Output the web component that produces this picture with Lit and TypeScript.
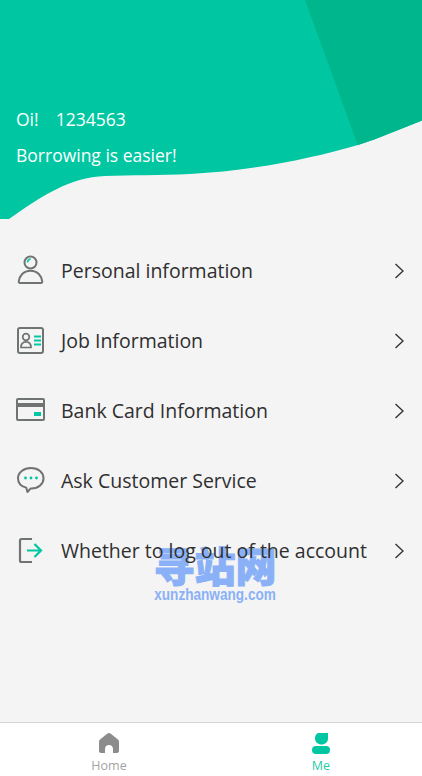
import { LitElement, html, css, svg } from 'lit';
import { customElement } from 'lit/decorators.js';

const GREY = '#6f7372';
const GREEN = '#00c7a2';

const menu = [
  {
    label: 'Personal information',
    icon: svg`
      <circle cx="14.500" cy="7.500" r="6" fill="none" stroke="${GREY}" stroke-width="2"/>
      <path d="M11.500 7.500a3.400 3.400 0 0 1 3.200-3.400" fill="none" stroke="${GREEN}" stroke-width="1.500"/>
      <path d="M4 28c-.9 0-1.400-.5-1.300-1.300.6-6 4.800-11 11.800-11s11.200 5 11.800 11c.1.800-.4 1.300-1.300 1.300z" fill="none" stroke="${GREY}" stroke-width="2"/>`,
  },
  {
    label: 'Job Information',
    icon: svg`
      <rect x="2" y="3" width="25" height="25" rx="2" fill="none" stroke="${GREY}" stroke-width="2"/>
      <circle cx="10" cy="12" r="3.300" fill="none" stroke="${GREY}" stroke-width="1.700"/>
      <path d="M5 22.500c0-3.700 2-5.700 5-5.700s5 2 5 5.700z" fill="none" stroke="${GREY}" stroke-width="1.700"/>
      <path d="M18 11.500h7M18 15.500h7M18 19.500h7" stroke="${GREEN}" stroke-width="1.800"/>`,
  },
  {
    label: 'Bank Card Information',
    icon: svg`
      <rect x="1" y="4" width="27" height="21" rx="1" fill="none" stroke="${GREY}" stroke-width="2"/>
      <rect x="1" y="8" width="27" height="4" fill="${GREY}"/>
      <rect x="18" y="17" width="7" height="4" fill="${GREEN}"/>`,
  },
  {
    label: 'Ask Customer Service',
    icon: svg`
      <path d="M15 3c7.500 0 12.500 4.500 12.500 10.200s-5 10.200-12 10.200h-.8L11.500 27l-1.300-4.400C5 21.300 2 17.700 2 13.200 2 7.500 7.500 3 15 3z" fill="none" stroke="${GREY}" stroke-width="2" stroke-linejoin="round"/>
      <circle cx="9.500" cy="13" r="1.400" fill="${GREEN}"/>
      <circle cx="15" cy="13" r="1.400" fill="${GREEN}"/>
      <circle cx="20.500" cy="13" r="1.400" fill="${GREEN}"/>`,
  },
  {
    label: 'Whether to log out of the account',
    icon: svg`
      <path d="M16 4H5.500C4.500 4 4 4.500 4 5.500v20c0 1 .5 1.500 1.500 1.500H16" fill="none" stroke="${GREY}" stroke-width="2.200"/>
      <path d="M11 15.500h14M18.500 9l6.500 6.500-6.500 6.500" fill="none" stroke="${GREEN}" stroke-width="2.200"/>`,
  },
];

@customElement('app-root')
export class AppRoot extends LitElement {
  static styles = css`
    :host {
      display: flex;
      flex-direction: column;
      position: relative;
      height: 776px;
      overflow: hidden;
      background: #f4f4f4;
      font-family: 'Open Sans', 'Noto Sans', sans-serif;
    }
    .header {
      position: relative;
      height: 220px;
      flex: none;
      box-sizing: border-box;
      padding: 107px 16px 0;
      color: #fff;
      font-size: 17.500px;
      line-height: 24px;
    }
    .wave {
      position: absolute;
      inset: 0;
    }
    .header p {
      position: relative;
      margin: 0 0 12px;
    }
    .greet span {
      margin-left: 17px;
    }
    .menu {
      position: relative;
      z-index: 1;
      flex: 1;
      padding-top: 16px;
    }
    .row {
      display: flex;
      align-items: center;
      height: 70px;
      padding: 0 18px 0 16px;
      color: #2f2f2f;
      font-size: 19.500px;
    }
    .icon {
      width: 30px;
      height: 32px;
      margin-right: 15px;
      flex: none;
    }
    .label {
      flex: 1;
      white-space: nowrap;
      padding-bottom: 2px;
    }
    .chevron {
      width: 10px;
      height: 16px;
      flex: none;
    }
    .tabs {
      flex: none;
      display: flex;
      gap: 12px;
      height: 53px;
      padding-left: 9px;
      background: #fff;
      border-top: 1px solid #d4d4d4;
    }
    .tab {
      width: 200px;
      display: flex;
      flex-direction: column;
      align-items: center;
      padding-top: 9px;
      font-size: 12.500px;
      line-height: 14px;
      color: #a3a3a3;
    }
    .tab svg {
      width: 22px;
      height: 22px;
      margin-bottom: 5px;
    }
    .tab.active {
      color: #1fcba8;
    }
    .mark {
      position: absolute;
      left: 153px;
      top: 541px;
      width: 124px;
      display: flex;
      flex-direction: column;
      align-items: center;
      color: #8ab1f7;
      font-weight: 700;
      pointer-events: none;
    }
    .mark b {
      font-family: 'Noto Sans CJK SC', sans-serif;
      font-size: 41px;
      font-weight: 900;
      line-height: 46px;
      white-space: nowrap;
      -webkit-text-stroke: 1px #8ab1f7;
    }
    .mark span {
      font-family: 'Liberation Sans', sans-serif;
      font-size: 17px;
      line-height: 16px;
      white-space: nowrap;
      transform: scaleX(0.8);
    }
  `;

  render() {
    return html`
      <div class="header">
        <svg class="wave" viewBox="0 0 422 220" width="422" height="220">
          <clipPath id="shape">
            <path d="M0 0H422V120.500C400 129 380 138 358 145C310 159 250 171 190 174C160 175.500 130 175 105 176C70 177 40 197 9 219H0Z"/>
          </clipPath>
          <g clip-path="url(#shape)">
            <rect width="422" height="220" fill="#00c7a2"/>
            <path d="M305 0H422V220H385Z" fill="#00b68c"/>
          </g>
        </svg>
        <p class="greet">Oi!<span>1234563</span></p>
        <p>Borrowing is easier!</p>
      </div>
      <div class="menu">
        ${menu.map(item => html`
          <div class="row">
            <svg class="icon" viewBox="0 0 30 32">${item.icon}</svg>
            <span class="label">${item.label}</span>
            <svg class="chevron" viewBox="0 0 10 16">
              <path d="M1.500 1l7.500 7-7.500 7" fill="none" stroke="#333" stroke-width="1.400"/>
            </svg>
          </div>
        `)}
      </div>
      <div class="tabs">
        <div class="tab">
          <svg viewBox="0 0 22 22">
            <path d="M9.500 1.600c1-.8 2-.8 3 0l7.500 6c.7.600 1 1.200 1 2.100v9.300c0 1.300-.8 2-2 2h-4v-4c0-2.500-1.700-4-4-4s-4 1.500-4 4v4H3c-1.200 0-2-.7-2-2V9.700c0-.9.3-1.500 1-2.100z" fill="#8c8c8c"/>
          </svg>
          Home
        </div>
        <div class="tab active">
          <svg viewBox="0 0 22 22">
            <path d="M9 1h9v5.500c0 3.500-2.800 6-6.500 6S5 10 5 6.500C5 3.500 6.500 1 9 1z" fill="#00c7a2"/>
            <rect x="2" y="14" width="18" height="8" rx="4" fill="#00c7a2"/>
          </svg>
          Me
        </div>
      </div>
      <div class="mark"><b>寻站网</b><span>xunzhanwang.com</span></div>
    `;
  }
}

declare global {
  interface HTMLElementTagNameMap {
    'app-root': AppRoot;
  }
}
